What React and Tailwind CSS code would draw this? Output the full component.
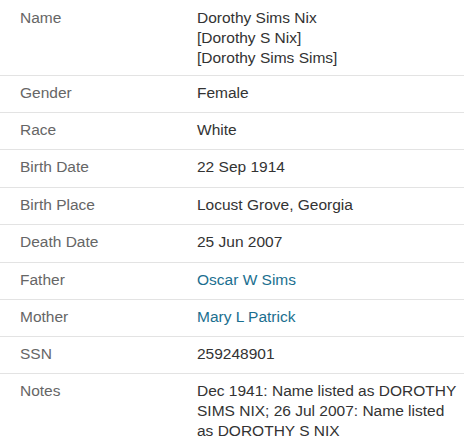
const rows = [
  { label: 'Name', value: ['Dorothy Sims Nix', '[Dorothy S Nix]', '[Dorothy Sims Sims]'] },
  { label: 'Gender', value: 'Female' },
  { label: 'Race', value: 'White' },
  { label: 'Birth Date', value: '22 Sep 1914', extra: true },
  { label: 'Birth Place', value: 'Locust Grove, Georgia' },
  { label: 'Death Date', value: '25 Jun 2007', extra: true },
  { label: 'Father', value: 'Oscar W Sims', link: true },
  { label: 'Mother', value: 'Mary L Patrick', link: true },
  { label: 'SSN', value: '259248901' },
  {
    label: 'Notes',
    value: 'Dec 1941: Name listed as DOROTHY SIMS NIX; 26 Jul 2007: Name listed as DOROTHY S NIX',
  },
];

const App = () => {
  return (
    <div className="w-[464px] h-[446px] overflow-hidden bg-white font-['Liberation_Sans',Arial,sans-serif] text-[15.5px] leading-[20px]">
      <table className="w-full border-collapse">
        <tbody>
          {rows.map((row, i) => {
            const pad = i === 0 ? 'pt-[8px] pb-[7px]' : row.extra ? 'pt-[7px] pb-[10px]' : 'pt-[7px] pb-[9px]';
            return (
              <tr key={row.label} className={i < rows.length - 1 ? 'border-b border-[#e3e3e3]' : ''}>
                <th className={`w-[197px] pl-5 pr-2 text-left align-top font-normal text-[#666] ${pad}`}>
                  {row.label}
                </th>
                <td className={`pr-1 align-top ${row.link ? 'text-[#1b6f8f]' : 'text-[#333]'} ${pad}`}>
                  {Array.isArray(row.value)
                    ? row.value.map(v => <div key={v}>{v}</div>)
                    : row.link
                    ? <a href="#">{row.value}</a>
                    : row.value}
                </td>
              </tr>
            );
          })}
        </tbody>
      </table>
    </div>
  );
};

export default App;
